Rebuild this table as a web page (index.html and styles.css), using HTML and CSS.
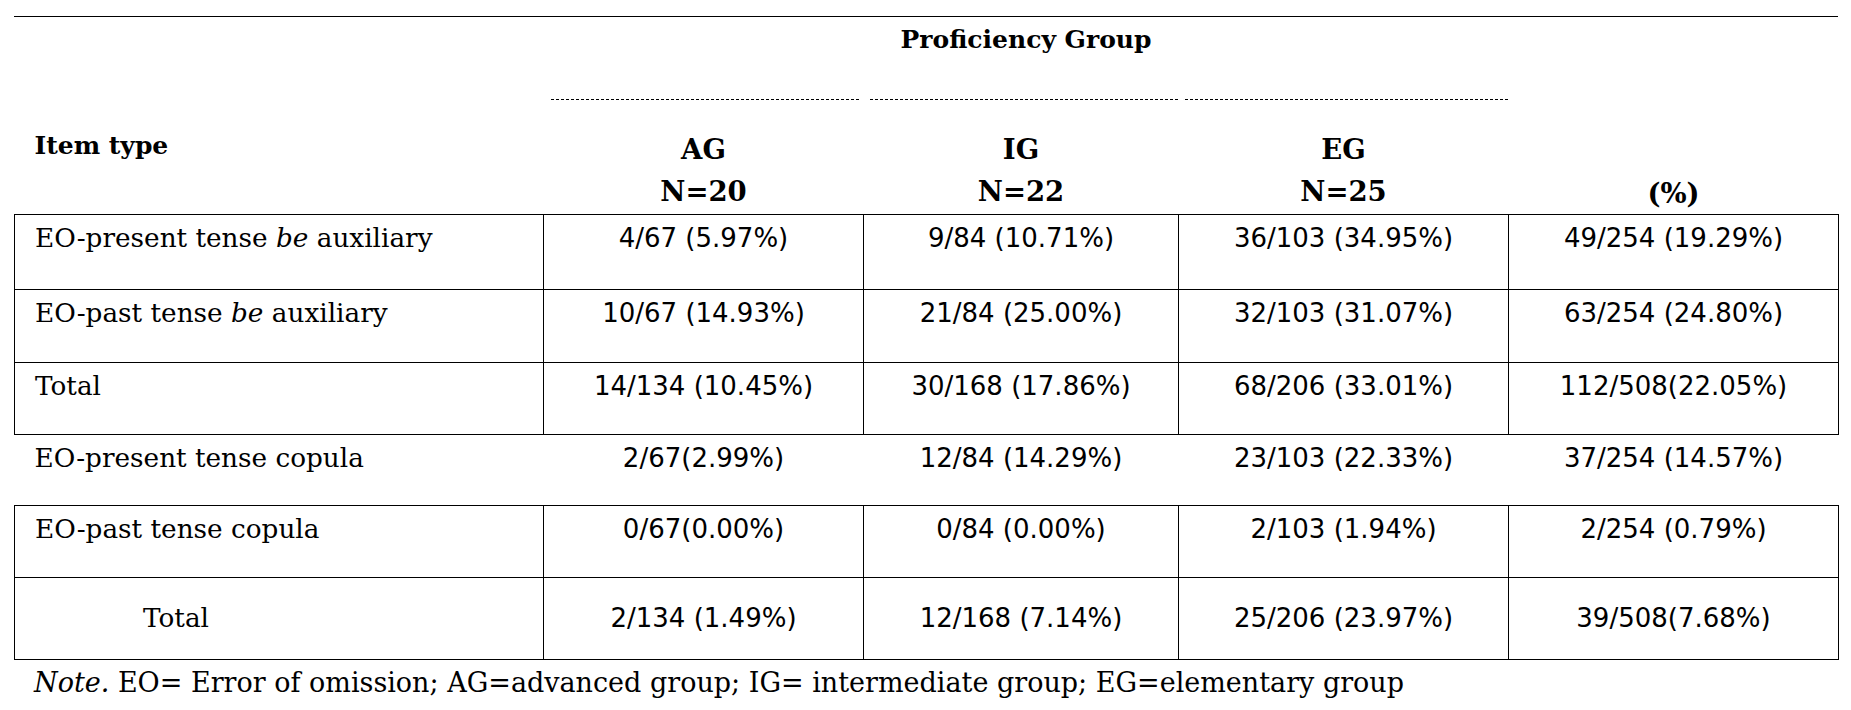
FILE: index.html
```html
<!DOCTYPE html>
<html lang="en">
<head>
<meta charset="utf-8">
<title>Omission errors by proficiency group</title>
<link rel="stylesheet" href="styles.css">
</head>
<body>
<div class="sheet">
  <table class="grid">
    <colgroup>
      <col class="c-item">
      <col class="c-ag">
      <col class="c-ig">
      <col class="c-eg">
      <col class="c-pct">
    </colgroup>
    <thead>
      <tr class="h-title">
        <th></th>
        <th colspan="3" class="title">Proficiency Group</th>
        <th></th>
      </tr>
      <tr class="h-rule">
        <th></th>
        <th><div class="dots dots-a"></div></th>
        <th><div class="dots"></div></th>
        <th><div class="dots dots-last"></div></th>
        <th></th>
      </tr>
      <tr class="h-groups">
        <th class="item-head">Item type</th>
        <th class="grp">AG<br>N=20</th>
        <th class="grp">IG<br>N=22</th>
        <th class="grp">EG<br>N=25</th>
        <th class="grp pct">(%)</th>
      </tr>
    </thead>
    <tbody>
      <tr class="r r1">
        <td class="lbl">EO-present tense <em>be</em> auxiliary</td>
        <td class="num">4/67 (5.97%)</td>
        <td class="num">9/84 (10.71%)</td>
        <td class="num">36/103 (34.95%)</td>
        <td class="num">49/254 (19.29%)</td>
      </tr>
      <tr class="r r2">
        <td class="lbl">EO-past tense <em>be</em> auxiliary</td>
        <td class="num">10/67 (14.93%)</td>
        <td class="num">21/84 (25.00%)</td>
        <td class="num">32/103 (31.07%)</td>
        <td class="num">63/254 (24.80%)</td>
      </tr>
      <tr class="r r3">
        <td class="lbl">Total</td>
        <td class="num">14/134 (10.45%)</td>
        <td class="num">30/168 (17.86%)</td>
        <td class="num">68/206 (33.01%)</td>
        <td class="num">112/508(22.05%)</td>
      </tr>
      <tr class="r r4 open">
        <td class="lbl">EO-present tense copula</td>
        <td class="num">2/67(2.99%)</td>
        <td class="num">12/84 (14.29%)</td>
        <td class="num">23/103 (22.33%)</td>
        <td class="num">37/254 (14.57%)</td>
      </tr>
      <tr class="r r5">
        <td class="lbl">EO-past tense copula</td>
        <td class="num">0/67(0.00%)</td>
        <td class="num">0/84 (0.00%)</td>
        <td class="num">2/103 (1.94%)</td>
        <td class="num">2/254 (0.79%)</td>
      </tr>
      <tr class="r r6 mid">
        <td class="lbl indent">Total</td>
        <td class="num">2/134 (1.49%)</td>
        <td class="num">12/168 (7.14%)</td>
        <td class="num">25/206 (23.97%)</td>
        <td class="num">39/508(7.68%)</td>
      </tr>
    </tbody>
  </table>
  <p class="note"><em>Note.</em> EO= Error of omission; AG=advanced group; IG= intermediate group; EG=elementary group</p>
</div>
</body>
</html>
```

FILE: styles.css
```css
html, body {
  margin: 0;
  padding: 0;
  background: #fff;
  color: #000;
}

.sheet {
  margin: 16px 13px 0 14px;
  border-top: 1px solid #000;
  font-family: "DejaVu Serif", "Liberation Serif", serif;
}

.grid {
  width: 100%;
  border-collapse: collapse;
  table-layout: fixed;
}

.c-item { width: 529px; }
.c-ag { width: 320px; }
.c-ig { width: 315px; }
.c-eg { width: 330px; }
.c-pct { width: 330px; }

th {
  padding: 0;
  font-weight: bold;
  font-size: 25px;
  border: none;
}

.h-title { height: 46px; }
.h-title .title {
  vertical-align: top;
  padding-top: 8px;
  line-height: 30px;
  text-align: center;
}

.h-rule { height: 57px; }
.h-rule th {
  vertical-align: top;
  padding-top: 36px;
}

.dots {
  height: 1px;
  margin: 0 1px 0 6px;
  background: repeating-linear-gradient(to right, #000 0 3px, transparent 3px 5px);
}
.dots-a { margin-left: 7px; margin-right: 4px; }
.dots-last { margin-right: 0; }

.h-groups { height: 94px; }
.h-groups th {
  vertical-align: top;
}
.item-head {
  text-align: left;
  padding: 11px 0 0 20px !important;
  line-height: 30px;
}
.grp {
  text-align: center;
  font-size: 27.5px;
  line-height: 42px;
  padding-top: 8px !important;
}
.grp.pct {
  vertical-align: bottom !important;
  padding: 0 !important;
}

.r td {
  border: 1px solid #000;
  vertical-align: top;
  padding: 8px 0 0 0;
  line-height: 30px;
  font-size: 26px;
}
.r1 { height: 75px; }
.r2 { height: 73px; }
.r3 { height: 72px; }
.r4 { height: 71px; }
.r5 { height: 72px; }
.r6 { height: 82px; }

.r.open td {
  border-left: none;
  border-right: none;
}

.r.mid td {
  vertical-align: middle;
  padding-top: 0;
}

.r td.lbl {
  text-align: left;
  padding-left: 20px;
  font-size: 26.3px;
}
.r td.lbl.indent {
  padding-left: 128px;
}

.num {
  text-align: center;
  font-family: "DejaVu Sans", "Liberation Sans", sans-serif;
}

.note {
  margin: 8px 0 0 20px;
  font-size: 27px;
  line-height: 30px;
}
```
